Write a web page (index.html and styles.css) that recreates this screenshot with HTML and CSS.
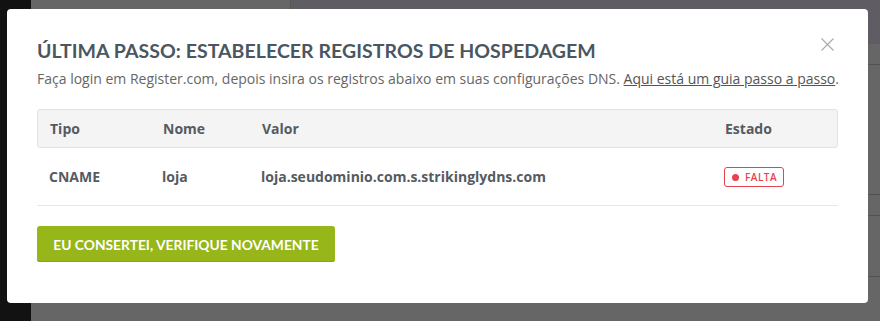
FILE: index.html
```html
<!DOCTYPE html>
<html lang="pt">
<head>
<meta charset="utf-8">
<link rel="stylesheet" href="styles.css">
</head>
<body>
<div class="backdrop">
  <div class="side"></div>
  <div class="main">
    <div class="topbar">
      <div class="tb-left"></div>
      <div class="tb-right"></div>
    </div>
    <div class="rows">
      <div class="row r1"></div>
      <div class="row r2"></div>
      <div class="row r3"></div>
      <div class="row r4"></div>
    </div>
  </div>
</div>

<div class="modal">
  <button class="close" aria-label="Fechar">
    <svg width="13" height="13" viewBox="0 0 13 13"><path d="M0.5 0.5L12.5 12.5M12.5 0.5L0.5 12.5" stroke="#a9a9a9" stroke-width="1.1" fill="none"/></svg>
  </button>
  <h2 class="title">ÚLTIMA PASSO: ESTABELECER REGISTROS DE HOSPEDAGEM</h2>
  <p class="lead">Faça login em Register.com, depois insira os registros abaixo em suas configurações DNS. <a href="#">Aqui está um guia passo a passo</a>.</p>
  <div class="table">
    <div class="thead">
      <div class="c1">Tipo</div>
      <div class="c2">Nome</div>
      <div class="c3">Valor</div>
      <div class="c4">Estado</div>
    </div>
    <div class="trow">
      <div class="c1">CNAME</div>
      <div class="c2">loja</div>
      <div class="c3">loja.seudominio.com.s.strikinglydns.com</div>
      <div class="c4"><span class="badge"><span class="dot"></span>FALTA</span></div>
    </div>
  </div>
  <button class="btn">EU CONSERTEI, VERIFIQUE NOVAMENTE</button>
</div>
</body>
</html>
```
FILE: styles.css
```css
html, body {
  margin: 0;
  padding: 0;
  width: 880px;
  height: 321px;
  overflow: hidden;
  background: #666666;
}

.backdrop {
  display: flex;
  width: 880px;
  height: 321px;
}

.side {
  width: 31px;
  background: #121212;
}

.main {
  flex: 1;
  display: flex;
  flex-direction: column;
}

.topbar {
  display: flex;
  height: 44px;
}

.tb-left {
  width: 259px;
  background: #666666;
  border-right: 1px solid #575757;
}

.tb-right {
  flex: 1;
  background: #5f5c63;
}

.rows {
  flex: 1;
  display: flex;
  flex-direction: column;
}

.row {
  border-bottom: 1px solid #525252;
}
.r1 { height: 20px; }
.r2 { height: 129px; }
.r3 { height: 20px; }
.r4 { height: 60px; }

.modal {
  position: absolute;
  left: 7px;
  top: 9px;
  width: 861px;
  height: 294px;
  box-sizing: border-box;
  background: #ffffff;
  border-radius: 4px;
  padding: 30px 30px 0 30px;
}

.close {
  position: absolute;
  right: 34px;
  top: 29px;
  border: 0;
  padding: 0;
  background: none;
  width: 13px;
  height: 13px;
  display: flex;
}

.title {
  margin: 0;
  font-family: Lato, "Open Sans", sans-serif;
  font-weight: 700;
  font-size: 19.5px;
  line-height: 24px;
  color: #4a5761;
  letter-spacing: 0.05px;
}

.lead {
  margin: 6px 0 0 0;
  font-family: "Open Sans", sans-serif;
  font-size: 14px;
  line-height: 20px;
  color: #666666;
  white-space: nowrap;
}

.lead a {
  color: #555555;
  text-decoration: underline;
}

.table {
  margin-top: 20px;
  font-family: "Open Sans", sans-serif;
  font-size: 14px;
  font-weight: 700;
  color: #555b62;
}

.thead, .trow {
  display: grid;
  grid-template-columns: 113px 99px 463px 1fr;
  align-items: center;
  padding: 0 12px;
}

.thead {
  height: 37px;
  background: #f4f4f4;
  border: 1px solid #e2e2e2;
  border-radius: 3px;
}

.trow {
  height: 57px;
  border-bottom: 1px solid #e6e6e6;
}

.badge {
  display: inline-flex;
  align-items: center;
  gap: 6px;
  height: 18px;
  padding: 0 6px 0 7px;
  border: 1px solid #e5434f;
  border-radius: 3px;
  color: #e5434f;
  font-size: 10px;
  font-weight: 600;
  letter-spacing: 0.5px;
}

.dot {
  width: 7px;
  height: 7px;
  border-radius: 50%;
  background: #e5434f;
}

.btn {
  margin-top: 20px;
  height: 36px;
  width: 298px;
  border: 0;
  border-radius: 3px;
  background: #96b619;
  color: #ffffff;
  font-family: Lato, "Open Sans", sans-serif;
  font-weight: 700;
  font-size: 13.8px;
  padding: 0;
  box-shadow: inset 0 -1px 0 #88a515;
}
```
